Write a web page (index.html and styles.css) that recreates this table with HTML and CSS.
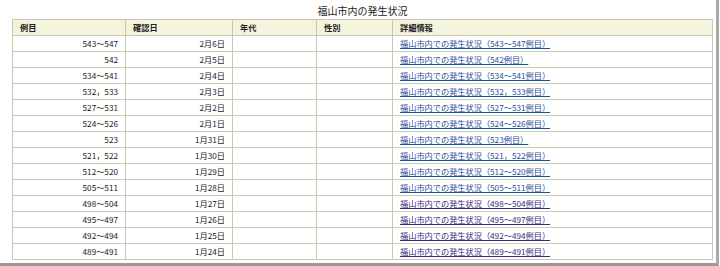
FILE: index.html
```html
<!DOCTYPE html>
<html lang="ja">
<head>
<meta charset="utf-8">
<link rel="stylesheet" href="styles.css">
</head>
<body>
<div class="frame">
  <table class="cases">
    <caption>福山市内の発生状況</caption>
    <colgroup>
      <col class="c1"><col class="c2"><col class="c3"><col class="c4"><col class="c5">
    </colgroup>
    <thead>
      <tr><th>例目</th><th>確認日</th><th>年代</th><th>性別</th><th>詳細情報</th></tr>
    </thead>
    <tbody>
      <tr><td class="num">543～547</td><td class="num">2月6日</td><td></td><td></td><td><a href="#">福山市内での発生状況（543～547例目）</a></td></tr>
      <tr><td class="num">542</td><td class="num">2月5日</td><td></td><td></td><td><a href="#">福山市内での発生状況（542例目）</a></td></tr>
      <tr><td class="num">534～541</td><td class="num">2月4日</td><td></td><td></td><td><a href="#">福山市内での発生状況（534～541例目）</a></td></tr>
      <tr><td class="num">532，533</td><td class="num">2月3日</td><td></td><td></td><td><a href="#">福山市内での発生状況（532，533例目）</a></td></tr>
      <tr><td class="num">527～531</td><td class="num">2月2日</td><td></td><td></td><td><a href="#">福山市内での発生状況（527～531例目）</a></td></tr>
      <tr><td class="num">524～526</td><td class="num">2月1日</td><td></td><td></td><td><a href="#">福山市内での発生状況（524～526例目）</a></td></tr>
      <tr><td class="num">523</td><td class="num">1月31日</td><td></td><td></td><td><a href="#">福山市内での発生状況（523例目）</a></td></tr>
      <tr><td class="num">521，522</td><td class="num">1月30日</td><td></td><td></td><td><a href="#">福山市内での発生状況（521，522例目）</a></td></tr>
      <tr><td class="num">512～520</td><td class="num">1月29日</td><td></td><td></td><td><a href="#">福山市内での発生状況（512～520例目）</a></td></tr>
      <tr><td class="num">505～511</td><td class="num">1月28日</td><td></td><td></td><td><a href="#">福山市内での発生状況（505～511例目）</a></td></tr>
      <tr><td class="num">498～504</td><td class="num">1月27日</td><td></td><td></td><td><a class="visited" href="#">福山市内での発生状況（498～504例目）</a></td></tr>
      <tr><td class="num">495～497</td><td class="num">1月26日</td><td></td><td></td><td><a class="visited" href="#">福山市内での発生状況（495～497例目）</a></td></tr>
      <tr><td class="num">492～494</td><td class="num">1月25日</td><td></td><td></td><td><a class="visited" href="#">福山市内での発生状況（492～494例目）</a></td></tr>
      <tr><td class="num">489～491</td><td class="num">1月24日</td><td></td><td></td><td><a class="visited" href="#">福山市内での発生状況（489～491例目）</a></td></tr>
    </tbody>
  </table>
</div>
</body>
</html>
```

FILE: styles.css
```css
html, body {
  margin: 0;
  padding: 0;
  background: #ffffff;
}

body {
  font-family: "Noto Sans CJK JP", "Noto Sans", sans-serif;
  font-size: 8.2px;
  color: #222222;
}

.frame {
  box-sizing: border-box;
  width: 719px;
  height: 266px;
  padding: 0 0 0 12px;
  border-right: 3px solid #a8a8a8;
  border-bottom: 3px solid #9a9a9a;
  background: #ffffff;
}

.cases {
  border-collapse: collapse;
  table-layout: fixed;
  width: 701px;
  border: 1px solid #c3c3ab;
}

.cases caption {
  height: 19px;
  line-height: 22px;
  font-size: 10px;
  color: #222222;
  text-align: center;
}

.c1 { width: 113px; }
.c2 { width: 107px; }
.c3 { width: 84px; }
.c4 { width: 76px; }
.c5 { width: 320px; }

.cases th,
.cases td {
  border: 1px solid #c8c8b2;
  height: 15px;
  padding: 0 7px;
  line-height: 15px;
  white-space: nowrap;
  overflow: hidden;
}

.cases th {
  background: #f4f3de;
  text-align: left;
  font-weight: bold;
  color: #222222;
}

.cases td.num {
  text-align: right;
  padding-right: 7px;
}

.cases a {
  color: #1f4f99;
  text-decoration: underline;
}

.cases a.visited {
  color: #3b2a7a;
}
```
